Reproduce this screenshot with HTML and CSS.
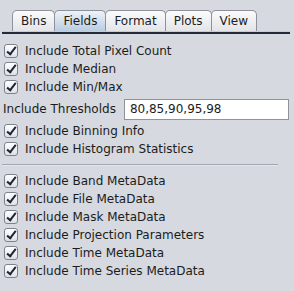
FILE: index.html
```html
<!DOCTYPE html>
<html lang="en">
<head>
    <meta charset="UTF-8">
    <meta name="viewport" content="width=device-width, initial-scale=1.0">
    <title>Statistics Options</title>
    <link rel="stylesheet" href="styles.css">
</head>
<body>
    <div class="tabs">
        <div class="tab">Bins</div>
        <div class="tab selected">Fields</div>
        <div class="tab">Format</div>
        <div class="tab">Plots</div>
        <div class="tab">View</div>
    </div>
    <div class="tab-line"></div>

    <div class="panel">
        <label class="check"><span class="box"></span>Include Total Pixel Count</label>
        <label class="check"><span class="box"></span>Include Median</label>
        <label class="check"><span class="box"></span>Include Min/Max</label>
        <div class="field-row">
            <span>Include Thresholds</span>
            <input type="text" class="field" value="80,85,90,95,98">
        </div>
        <label class="check"><span class="box"></span>Include Binning Info</label>
        <label class="check"><span class="box"></span>Include Histogram Statistics</label>
        <div class="separator"></div>
        <label class="check"><span class="box"></span>Include Band MetaData</label>
        <label class="check"><span class="box"></span>Include File MetaData</label>
        <label class="check"><span class="box"></span>Include Mask MetaData</label>
        <label class="check"><span class="box"></span>Include Projection Parameters</label>
        <label class="check"><span class="box"></span>Include Time MetaData</label>
        <label class="check"><span class="box"></span>Include Time Series MetaData</label>
    </div>
</body>
</html>
```

FILE: styles.css
```css
body {
    font-family: "DejaVu Sans", sans-serif;
    font-size: 12px;
    color: #1c1c1c;
    background-color: #d6d9df;
    margin: 0;
    padding: 0;
}
.tabs {
    display: flex;
    padding: 10px 0 0 12px;
    height: 21px;
}
.tab {
    height: 20px;
    line-height: 21px;
    padding: 0 8px;
    border: 1px solid #8e939b;
    border-bottom: none;
    border-radius: 5px 5px 0 0;
    background: linear-gradient(#fbfbfc, #e2e4e8);
    margin-right: -1px;
}
.tab.selected {
    background: linear-gradient(#eef3f8, #b9cce0);
    position: relative;
    z-index: 1;
}
.tab-line {
    margin: 0 4px 0 2px;
    height: 1px;
    background-color: #bccee0;
    border-bottom: 2px solid #232a39;
}
.panel {
    display: flex;
    flex-direction: column;
    padding-top: 8px;
}
.check {
    display: flex;
    align-items: center;
    gap: 7px;
    height: 18px;
    padding-left: 4px;
}
.box {
    position: relative;
    width: 12px;
    height: 12px;
    border: 1px solid #7c818b;
    border-radius: 3px;
    background: linear-gradient(#ffffff, #dde1e7);
}
.box::after {
    content: "";
    position: absolute;
    left: 4px;
    top: 0px;
    width: 3px;
    height: 8px;
    border: solid #1f2430;
    border-width: 0 2px 2px 0;
    transform: rotate(38deg);
}
.field-row {
    display: flex;
    align-items: center;
    gap: 8px;
    height: 26px;
    padding-left: 3px;
}
.field {
    width: 153px;
    height: 19px;
    padding: 0 5px;
    border: 1px solid #8e939c;
    font-family: "DejaVu Sans", sans-serif;
    font-size: 12px;
    color: #1c1c1c;
    background-color: #ffffff;
    outline: none;
}
.separator {
    margin: 6px 16px 6px 2px;
    height: 1px;
    background-color: #a2a6ae;
    border-bottom: 1px solid #e4e6ea;
}
```
